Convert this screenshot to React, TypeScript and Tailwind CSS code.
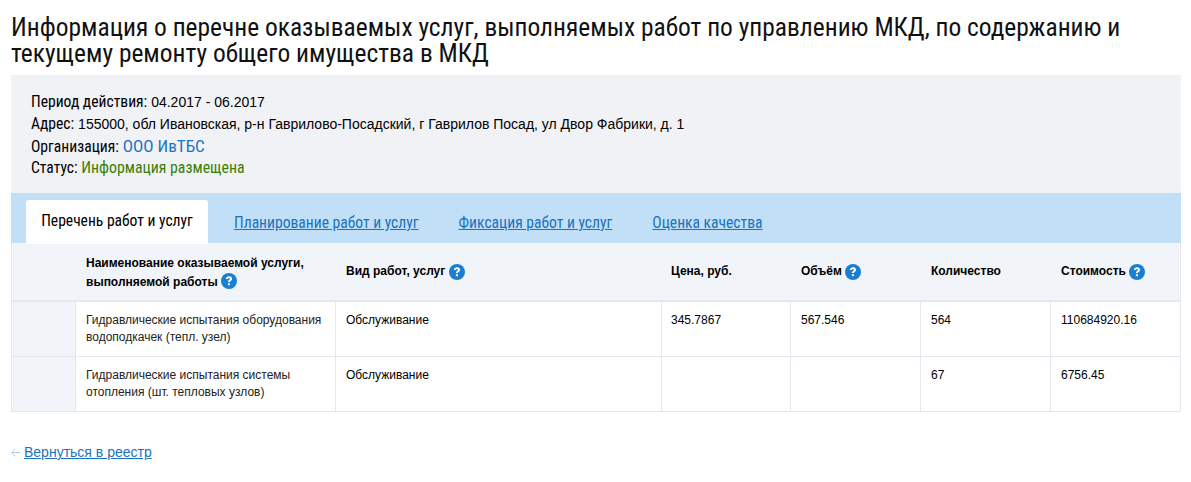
import React from 'react';

const condensed = "font-['Roboto_Condensed','Liberation_Sans_Narrow',Roboto,sans-serif] [font-stretch:75%]";

const columns = 'grid grid-cols-[64px_260px_326px_129px_130px_130px_131px]';

function Help({ className = 'align-[-1px]' }: { className?: string }) {
  return (
    <svg viewBox="0 0 16 16" className={`inline-block w-[16px] h-[16px] -my-[4px] ${className}`}>
      <circle cx="8" cy="8" r="8" fill="#1a7fd4" />
      <path d="M4.9 6c.1-1.7 1.3-2.7 3.2-2.7 1.8 0 3 .9 3 2.4 0 1.1-.6 1.7-1.4 2.2-.6.4-.8.6-.8 1.2H6.9c0-1.1.3-1.7 1.1-2.2.6-.4.9-.6.9-1.1 0-.5-.3-.8-.9-.8-.6 0-1 .3-1 1H4.9z" fill="#fff" />
      <rect x="6.9" y="10.2" width="2" height="2" fill="#fff" />
    </svg>
  );
}

const tabs = ['Планирование работ и услуг', 'Фиксация работ и услуг', 'Оценка качества'];

const rows = [
  {
    name: ['Гидравлические испытания оборудования', 'водоподкачек (тепл. узел)'],
    kind: 'Обслуживание',
    price: '345.7867',
    volume: '567.546',
    qty: '564',
    cost: '110684920.16',
  },
  {
    name: ['Гидравлические испытания системы', 'отопления (шт. тепловых узлов)'],
    kind: 'Обслуживание',
    price: '',
    volume: '',
    qty: '67',
    cost: '6756.45',
  },
];

export default function App() {
  return (
    <div className="w-[1191px] h-[482px] bg-white text-black overflow-hidden font-['Liberation_Sans',Arial,sans-serif] pt-[14px] px-[11px]">
      <h1 className={`${condensed} text-[25.45px] leading-[26px] font-normal h-[61px] text-[#111]`}>
        Информация о перечне оказываемых услуг, выполняемых работ по управлению МКД, по содержанию и текущему ремонту общего имущества в МКД
      </h1>

      <div className="w-[1170px]">
        {/* Info panel */}
        <div className="bg-[#f1f2f6] h-[118px] pt-[16px] pl-[20px] text-[14px] leading-[22px]">
          <div className="h-[22px]">
            <span className={`${condensed} text-[15.6px]`}>Период действия:</span> 04.2017 - 06.2017
          </div>
          <div className="h-[22px]">
            <span className={`${condensed} text-[15.6px]`}>Адрес:</span> 155000, обл Ивановская, р-н Гаврилово-Посадский, г Гаврилов Посад, ул Двор Фабрики, д. 1
          </div>
          <div className="h-[22px]">
            <span className={`${condensed} text-[15.6px]`}>Организация:</span>{' '}
            <span className={`${condensed} text-[#1a73bd] text-[17.1px]`}>ООО ИвТБС</span>
          </div>
          <div className={`${condensed} h-[22px] text-[15.6px]`}>
            Статус: <span className="text-[#3a8008] text-[15.8px]">Информация размещена</span>
          </div>
        </div>

        {/* Tabs */}
        <div className={`${condensed} bg-[#c1dff7] h-[50px] pl-[15px] pt-[7px] flex text-[15.6px]`}>
          <div className="bg-white w-[182px] h-[44px] rounded-t-[3px] flex items-center justify-center z-10">
            Перечень работ и услуг
          </div>
          <div className="flex gap-[40px] pl-[26px] pt-[14px]">
            {tabs.map((t) => (
              <a key={t} className="text-[#1a73bd] underline leading-[18px]">
                {t}
              </a>
            ))}
          </div>
        </div>

        {/* Table */}
        <div className="border-x border-b border-[#e4e8ee] text-[12px]">
          <div className={`${columns} bg-[#f1f4f8] h-[58px] border-b border-[#e4e8ee] font-bold leading-[19px]`}>
            <div />
            <div className="pl-[10px] pt-[11px]">
              Наименование оказываемой услуги,
              <br />
              выполняемой работы <Help className="align-[1px]" />
            </div>
            <div className="pl-[10px] pt-[19px]">
              Вид работ, услуг <Help />
            </div>
            <div className="pl-[9px] pt-[19px]">Цена, руб.</div>
            <div className="pl-[10px] pt-[19px]">
              Объём <Help />
            </div>
            <div className="pl-[10px] pt-[19px]">Количество</div>
            <div className="pl-[10px] pt-[19px]">
              Стоимость <Help />
            </div>
          </div>
          {rows.map((r) => (
            <div key={r.cost} className={`${columns} h-[55px] leading-[17px] border-t border-[#e4e8ee]`}>
              <div className="bg-[#f1f4f8] border-r border-[#e4e8ee]" />
              <div className="pl-[10px] pt-[10px] border-r border-[#e4e8ee] text-[#222]">
                {r.name[0]}
                <br />
                {r.name[1]}
              </div>
              <div className="pl-[10px] pt-[10px] border-r border-[#e4e8ee]">{r.kind}</div>
              <div className="pl-[9px] pt-[10px] border-r border-[#e4e8ee]">{r.price}</div>
              <div className="pl-[10px] pt-[10px] border-r border-[#e4e8ee]">{r.volume}</div>
              <div className="pl-[10px] pt-[10px] border-r border-[#e4e8ee]">{r.qty}</div>
              <div className="pl-[10px] pt-[10px]">{r.cost}</div>
            </div>
          ))}
        </div>

        <div className="mt-[31px] flex items-center text-[14px] leading-[18px]">
          <svg viewBox="0 0 9 9" className="w-[9px] h-[9px] mr-[4px] mt-[1px]" fill="none" stroke="#a9cbe6" strokeWidth="1">
            <path d="M9 4.5H.8M4.5.8.8 4.5l3.7 3.7" />
          </svg>
          <a className="text-[#1a73bd] underline">Вернуться в реестр</a>
        </div>
      </div>
    </div>
  );
}
